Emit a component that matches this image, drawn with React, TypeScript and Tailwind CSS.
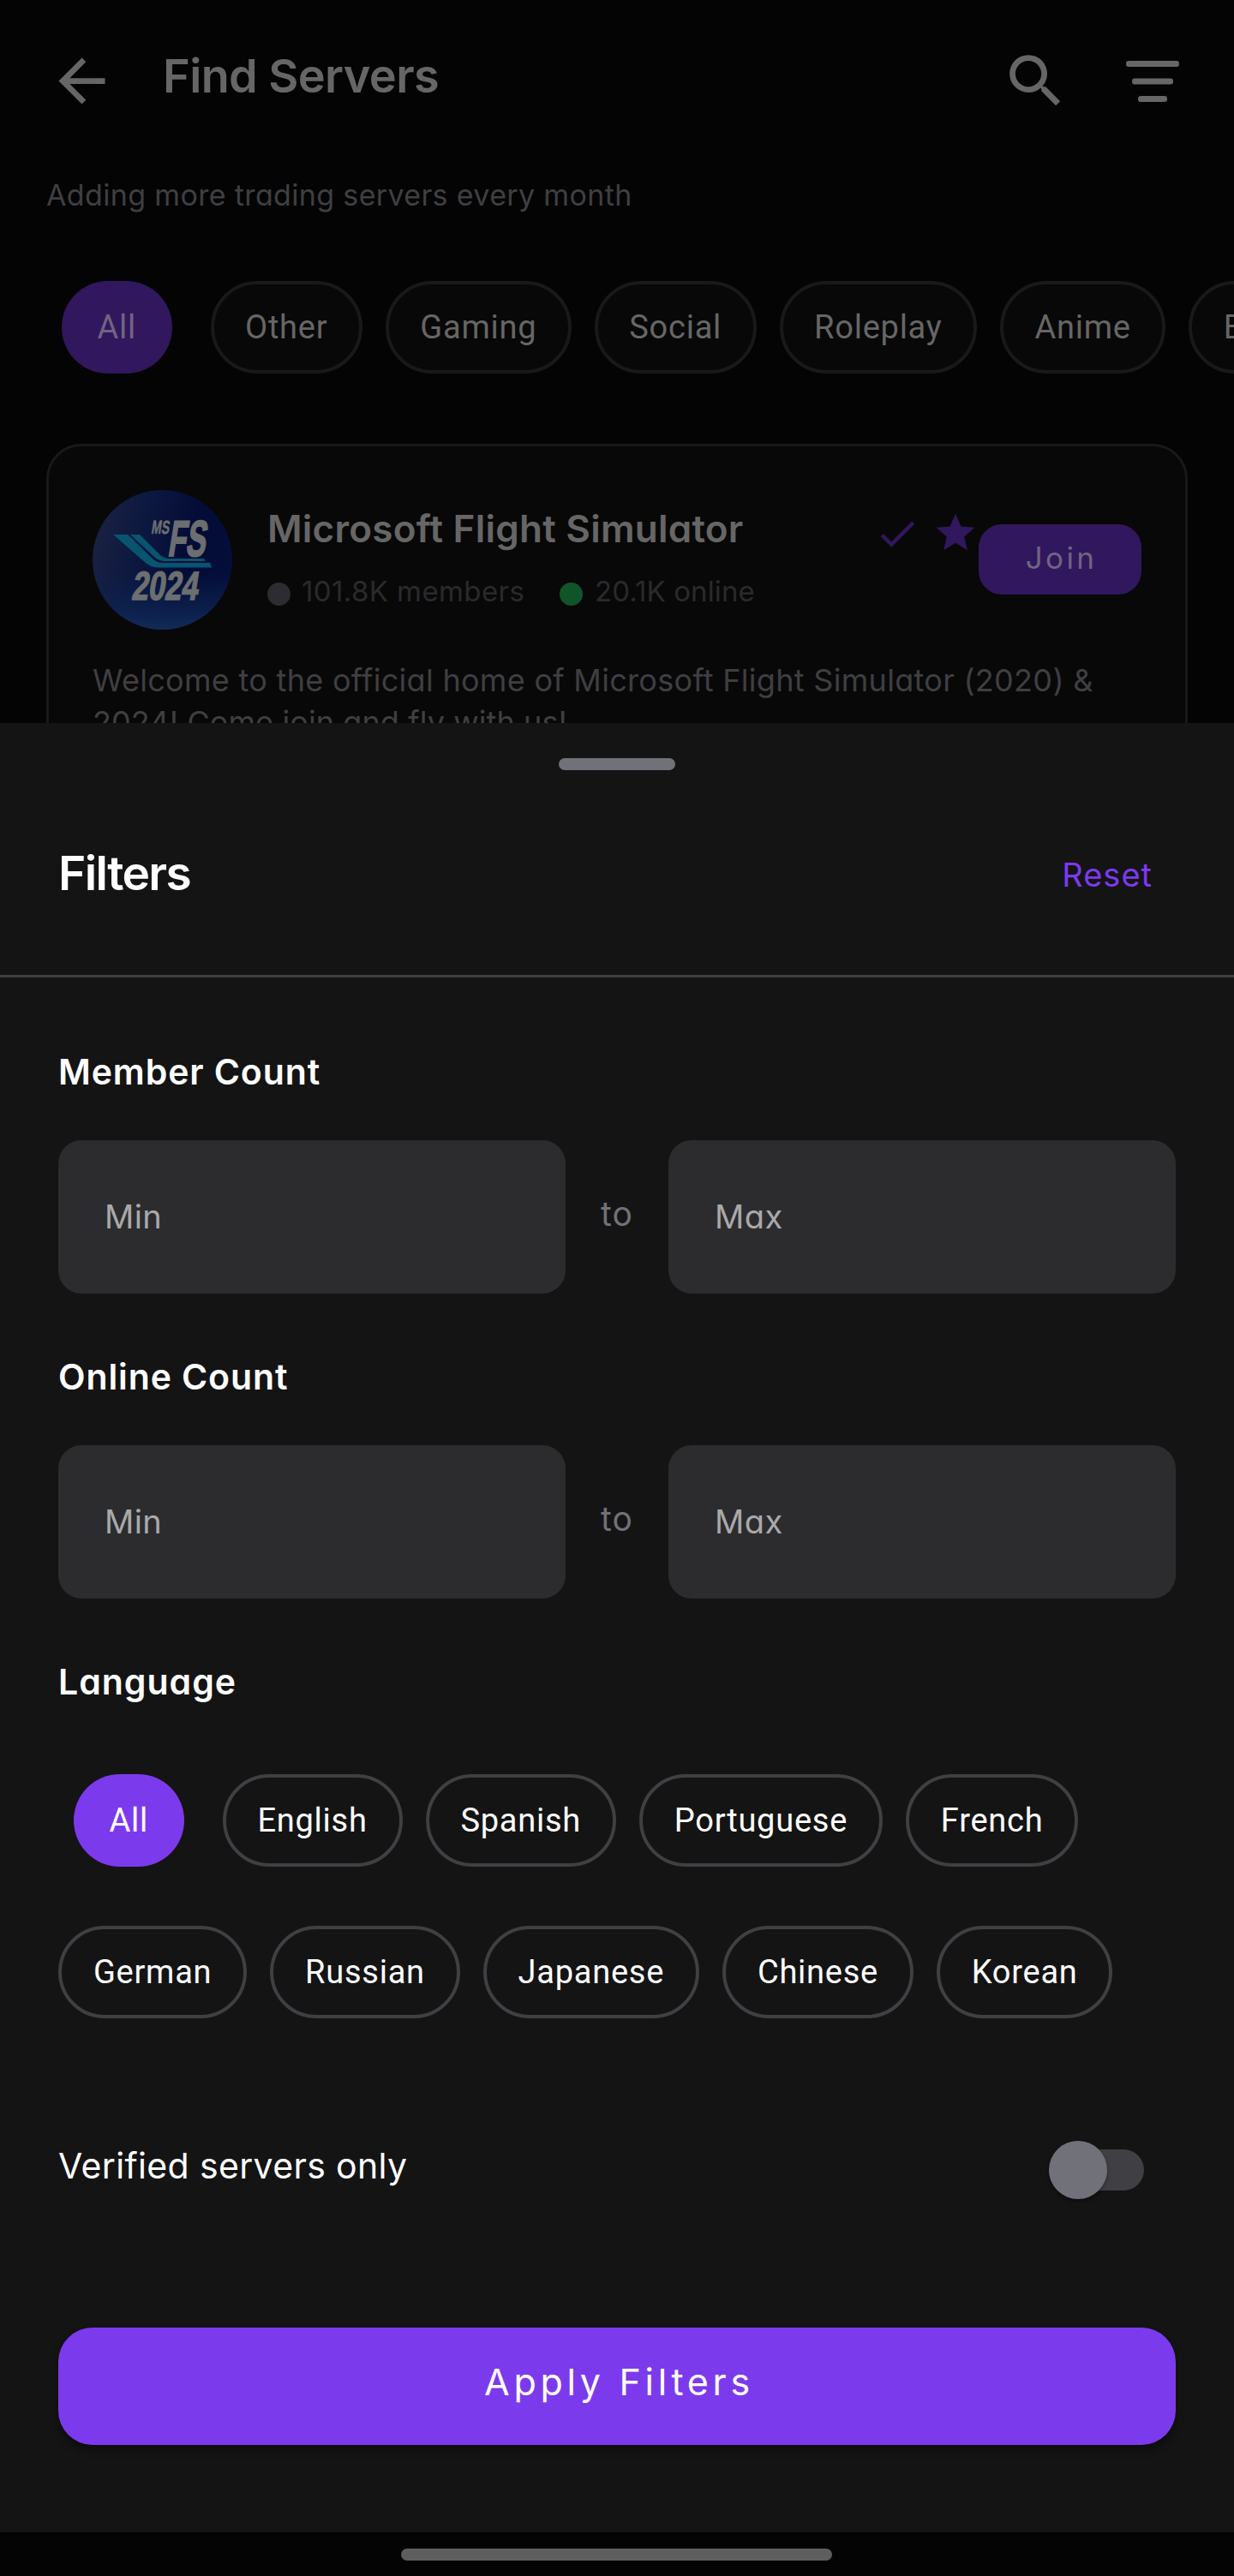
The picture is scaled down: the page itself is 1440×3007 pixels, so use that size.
import React, { useState } from 'react';
import { MdArrowBack, MdCheck, MdSearch, MdStar } from 'react-icons/md';

const categories = ['All', 'Other', 'Gaming', 'Social', 'Roleplay', 'Anime', 'Education'];

const languageRows = [
  ['All', 'English', 'Spanish', 'Portuguese', 'French'],
  ['German', 'Russian', 'Japanese', 'Chinese', 'Korean'],
];

const chipBase =
  "h-[108px] shrink-0 rounded-full flex items-center justify-center font-['Roboto',sans-serif] text-[38px] leading-none tracking-[0.75px] whitespace-nowrap";

interface ChipProps {
  label: string;
  active: boolean;
  dimmed?: boolean;
  onClick?: () => void;
}

const Chip: React.FC<ChipProps> = ({ label, active, dimmed, onClick }) => {
  let colors = 'px-[36.9px] border-4 border-[#3f3f44] text-white';
  if (active) colors = 'mx-[18px] px-[41.5px] bg-[#7c3aed] text-white';
  if (dimmed) colors = 'px-[36.5px] border-4 border-[#19191b] bg-[#080808] text-[#666666]';
  if (dimmed && active) colors = 'mx-[18px] px-[41.5px] bg-[#31175e] text-[#706480]';

  return (
    <button onClick={onClick} className={`${chipBase} ${colors}`}>
      {label}
    </button>
  );
};

const SortIcon = () => (
  <svg width="62" height="48" viewBox="0 0 62 48" fill="#666666">
    <rect x="0" y="0" width="62" height="7" rx="3" />
    <rect x="7" y="20.5" width="48" height="7" rx="3" />
    <rect x="14" y="41" width="34" height="7" rx="3" />
  </svg>
);

const ServerAvatar = () => (
  <svg width="163" height="163" viewBox="0 0 163 163" className="shrink-0">
    <defs>
      <linearGradient id="sky" x1="0" y1="0.2" x2="1" y2="0.45">
        <stop offset="0" stopColor="#1b2340" />
        <stop offset="0.35" stopColor="#0d1840" />
        <stop offset="0.7" stopColor="#030c36" />
        <stop offset="1" stopColor="#040e3a" />
      </linearGradient>
      <linearGradient id="horizon" x1="0" y1="0" x2="0" y2="1">
        <stop offset="0.6" stopColor="#0e2250" stopOpacity="0" />
        <stop offset="0.85" stopColor="#0e2250" stopOpacity="0.8" />
        <stop offset="1" stopColor="#112c56" />
      </linearGradient>
    </defs>
    <circle cx="81.5" cy="81.5" r="81.5" fill="url(#sky)" />
    <circle cx="81.5" cy="81.5" r="81.5" fill="url(#horizon)" />
    <path d="M24 52H41L70 80Q75 85 82 85H137L139 90.500H78Q68 90.500 62 85Z" fill="#07556f" />
    <path d="M44 52H55L79 76Q84 80 90 80H130L132 83H85Q77 83 72 78Z" fill="#07556f" />
    <g fill="#6c6e70" stroke="#6c6e70" fontFamily="Liberation Sans, Arial, sans-serif" fontWeight="700">
      <text transform="translate(68 51) skewX(-9)" fontSize="22" strokeWidth="0.5" textLength="21" lengthAdjust="spacingAndGlyphs">MS</text>
      <text transform="translate(87 77) skewX(-9)" fontSize="59" strokeWidth="2" textLength="44" lengthAdjust="spacingAndGlyphs">FS</text>
      <text transform="translate(45 127.500) skewX(-9)" fontSize="47" strokeWidth="1.5" textLength="77" lengthAdjust="spacingAndGlyphs">2024</text>
    </g>
  </svg>
);

const RangeField: React.FC<{ label: string }> = ({ label }) => (
  <div className="mb-[77px]">
    <h3 className="text-[41px] leading-[40px] font-semibold tracking-[0.9px] text-white">{label}</h3>
    <div className="mt-[60px] flex items-center justify-between">
      <input
        placeholder="Min"
        className="h-[179px] w-[592px] rounded-[27px] bg-[#2c2c2e] px-[54px] pb-[2px] text-[38px] tracking-[0.4px] text-white placeholder:text-[#a9a9ab] outline-none"
      />
      <span className="mb-[9px] text-[39px] leading-none tracking-[1px] text-[#717178]">to</span>
      <input
        placeholder="Max"
        className="h-[179px] w-[592px] rounded-[27px] bg-[#2c2c2e] px-[54px] pb-[2px] text-[38px] tracking-[0.4px] text-white placeholder:text-[#a9a9ab] outline-none"
      />
    </div>
  </div>
);

const ServerList = () => (
  <div className="h-[844px] overflow-hidden bg-[#040404]">
    <header className="flex h-[211px] items-start pt-[54px] pl-[55px]">
      <MdArrowBack className="size-[81px] text-[#666666]" />
      <h1 className="mt-[8px] ml-[54px] flex-1 text-[54px] leading-none font-semibold tracking-[-0.6px] text-[#666666]">Find Servers</h1>
      <MdSearch className="size-[81px] text-[#666666]" />
      <div className="mt-[17px] mr-[64px] ml-[65px]">
        <SortIcon />
      </div>
    </header>

    <p className="ml-[54px] text-[34px] leading-[34px] tracking-[0.35px] text-[#3f3f42]">Adding more trading servers every month</p>

    <div className="mt-[83px] ml-[54px] flex gap-[27px]">
      {categories.map((category) => (
        <Chip key={category} label={category} active={category === 'All'} dimmed />
      ))}
    </div>

    <div className="mx-[54px] mt-[82px] h-[600px] rounded-[41px] border-[3px] border-[#19191a] bg-[#080808] px-[51px] pt-[51px]">
      <div className="flex items-start">
        <ServerAvatar />
        <div className="mt-[23px] ml-[41px] flex-1">
          <h2 className="text-[44px] leading-[44px] font-semibold tracking-[0.25px] whitespace-nowrap text-[#666666]">Microsoft Flight Simulator</h2>
          <div className="mt-[35px] flex items-start text-[33px] leading-[33px] tracking-[0.4px] whitespace-nowrap text-[#2a2a2d]">
            <span className="mt-[6px] size-[27px] rounded-full bg-[#2c2c31]" />
            <span className="ml-[13px] w-[301px]">101.8K members</span>
            <span className="mt-[6px] size-[27px] rounded-full bg-[#10552a]" />
            <span className="ml-[14px] tracking-[0.1px]">20.1K online</span>
          </div>
        </div>
        <MdCheck className="mt-[24px] size-[54px] text-[#31175e]" />
        <MdStar className="mt-[23px] ml-[14px] size-[54px] text-[#31175e]" />
        <button className="mt-[40px] h-[82px] w-[190px] rounded-[27px] bg-[#31175e] pb-[3px] pl-[3px] text-[35px] leading-none tracking-[3.4px] text-[#706480]">Join</button>
      </div>
      <p className="mt-[35px] text-[36px] leading-[49px] tracking-[0.3px] whitespace-nowrap text-[#3f3f42]">
        Welcome to the official home of Microsoft Flight Simulator (2020) &<br />
        <span className="tracking-[0.1px]">2024! Come join and fly with us!</span>
      </p>
    </div>
  </div>
);

const App: React.FC = () => {
  const [language, setLanguage] = useState('All');
  const [verifiedOnly, setVerifiedOnly] = useState(false);

  return (
    <div className="h-[3007px] w-[1440px] overflow-hidden bg-[#040404] font-['Inter',sans-serif] [font-feature-settings:'cv11']">
      <ServerList />

      {/* Bottom sheet */}
      <section className="h-[2112px] bg-[#141414] pt-[41px]">
        <div className="mx-auto h-[14px] w-[136px] rounded-full bg-[#71717a]" />
        <div className="flex h-[242px] items-start justify-between border-b-[3px] border-[#3f3f43] pt-[93px] pr-[95px] pl-[68px]">
          <h2 className="text-[55px] leading-none font-semibold tracking-[-1.6px] text-white">Filters</h2>
          <button onClick={() => setLanguage('All')} className="mt-[11px] text-[38px] leading-[37px] tracking-[1px] text-[#7c3aed]">Reset</button>
        </div>

        <div className="px-[68px] pt-[90px]">
          <RangeField label="Member Count" />
          <RangeField label="Online Count" />

          <h3 className="text-[41px] leading-[40px] font-semibold tracking-[1px] text-white">Language</h3>
          <div className="mt-[88px] flex flex-col gap-[69px]">
            {languageRows.map((row, index) => (
              <div key={index} className="flex gap-[27px]">
                {row.map((item) => (
                  <Chip key={item} label={item} active={item === language} onClick={() => setLanguage(item)} />
                ))}
              </div>
            ))}
          </div>

          <div className="mt-[143px] flex h-[68px] items-start justify-between">
            <span className="mt-[9px] text-[41px] leading-[41px] tracking-[0.35px] text-white">Verified servers only</span>
            <button
              role="switch"
              aria-checked={verifiedOnly}
              onClick={() => setVerifiedOnly(!verifiedOnly)}
              className="mt-[10px] mr-[37px] flex h-[48px] w-[101px] items-center rounded-full bg-[#3f3f44]"
            >
              <span className="-ml-[10px] size-[68px] shrink-0 rounded-full bg-[#71717a] shadow-[0_3px_4px_rgba(0,0,0,0.3)]" />
            </button>
          </div>

          <button className="mt-[150px] h-[137px] w-full rounded-[40px] bg-[#7c3aed] pb-[10px] pl-[5px] text-[43px] leading-none tracking-[4.7px] text-white shadow-[0_6px_10px_rgba(0,0,0,0.4)]">
            Apply Filters
          </button>
        </div>
      </section>

      <div className="mt-[19px] ml-[468px] h-[14px] w-[503px] rounded-full bg-[#5e5e5e]" />
    </div>
  );
};

export default App;
